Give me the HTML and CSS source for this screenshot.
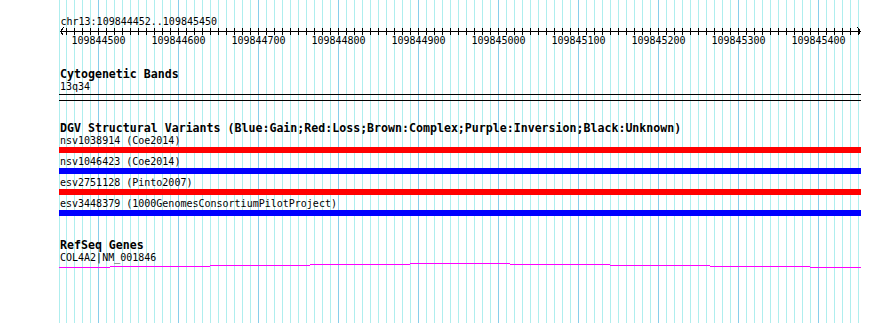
FILE: index.html
```html
<!DOCTYPE html>
<html lang="en">
<head>
  <meta charset="UTF-8" />
  <title>chr13:109844452..109845450</title>
  <link rel="stylesheet" href="styles.css">
</head>
<body>

<div class="panel">

  <!-- ruler -->
  <svg class="ruler" width="802" height="48" viewBox="0 0 802 48">
    <defs>
      <pattern id="ticks" x="7" y="28" width="8" height="7" patternUnits="userSpaceOnUse">
        <rect width="1" height="7" fill="#000"/>
      </pattern>
    </defs>
    <text x="1.5" y="25">chr13:109844452..109845450</text>
    <rect x="1" y="31" width="801" height="1" fill="#000"/>
    <rect x="7" y="28" width="794" height="7" fill="url(#ticks)"/>
    <path d="M4.5 27.5 1.5 31.5 4.5 35.5M798.5 27.5 801.5 31.5 798.5 35.5" fill="none" stroke="#000"/>
    <g text-anchor="middle">
      <text x="39.5" y="44">109844500</text>
      <text x="119.5" y="44">109844600</text>
      <text x="199.5" y="44">109844700</text>
      <text x="279.5" y="44">109844800</text>
      <text x="359.5" y="44">109844900</text>
      <text x="439.5" y="44">109845000</text>
      <text x="519.5" y="44">109845100</text>
      <text x="599.5" y="44">109845200</text>
      <text x="679.5" y="44">109845300</text>
      <text x="759.5" y="44">109845400</text>
    </g>
  </svg>

  <section class="track cyto">
    <h2>Cytogenetic Bands</h2>
    <div class="label">13q34</div>
    <div class="band"></div>
  </section>

  <section class="track dgv">
    <h2>DGV Structural Variants (Blue:Gain;Red:Loss;Brown:Complex;Purple:Inversion;Black:Unknown)</h2>
    <div class="feature">
      <div class="label">nsv1038914 (Coe2014)</div>
      <div class="bar loss"></div>
    </div>
    <div class="feature">
      <div class="label">nsv1046423 (Coe2014)</div>
      <div class="bar gain"></div>
    </div>
    <div class="feature">
      <div class="label">esv2751128 (Pinto2007)</div>
      <div class="bar loss"></div>
    </div>
    <div class="feature">
      <div class="label">esv3448379 (1000GenomesConsortiumPilotProject)</div>
      <div class="bar gain"></div>
    </div>
  </section>

  <section class="track refseq">
    <h2>RefSeq Genes</h2>
    <div class="label">COL4A2|NM_001846</div>
    <svg class="gene" width="802" height="5" viewBox="0 0 802 5">
      <g fill="#f0f">
        <rect x="0" y="4" width="51" height="1"/>
        <rect x="51" y="3" width="100" height="1"/>
        <rect x="151" y="2" width="100" height="1"/>
        <rect x="251" y="1" width="100" height="1"/>
        <rect x="351" y="0" width="100" height="1"/>
        <rect x="451" y="1" width="100" height="1"/>
        <rect x="551" y="2" width="100" height="1"/>
        <rect x="651" y="3" width="100" height="1"/>
        <rect x="751" y="4" width="51" height="1"/>
      </g>
    </svg>
  </section>

</div>

</body>
</html>
```

FILE: styles.css
```css
:root {
  --grid: #afeeee;
  --grid-major: #87ceeb;
  --gain: #0000ff;
  --loss: #ff0000;
}

* { box-sizing: border-box; margin: 0; padding: 0; }

body {
  width: 890px;
  height: 323px;
  overflow: hidden;
  background: #fff;
  color: #000;
  font-family: 'DejaVu Sans Mono', 'Liberation Mono', monospace;
  font-size: 10px;
}

.panel {
  margin-left: 59px;
  width: 802px;
  height: 323px;
  background:
    linear-gradient(90deg, var(--grid-major) 1px, transparent 1px) 39px 0 / 80px 100% repeat-x,
    linear-gradient(90deg, var(--grid) 1px, transparent 1px) 7px 0 / 8px 100% repeat-x,
    linear-gradient(var(--grid), var(--grid)) 0 0 / 1px 100% no-repeat;
}

svg {
  display: block;
  overflow: visible;
  shape-rendering: crispEdges;
}

.ruler text {
  font-family: 'DejaVu Sans Mono', 'Liberation Mono', monospace;
  font-size: 10px;
  fill: #000;
}

.track h2 {
  font-size: 11.6px;
  font-weight: bold;
  line-height: 13px;
  padding-left: 1px;
}

.label {
  line-height: 12px;
  padding-left: 1px;
  white-space: nowrap;
}

/* cytogenetic band, ends are outside the view */
.cyto { margin-top: 20px; }

.band {
  margin-top: 1px;
  height: 7px;
  border-top: 1px solid #000;
  border-bottom: 1px solid #000;
}

.dgv { margin-top: 21px; }

.feature { padding-bottom: 3px; }

.bar { height: 6px; }
.bar.loss { background: var(--loss); }
.bar.gain { background: var(--gain); }

.refseq { margin-top: 20px; }
.refseq .label { line-height: 11px; }
```
